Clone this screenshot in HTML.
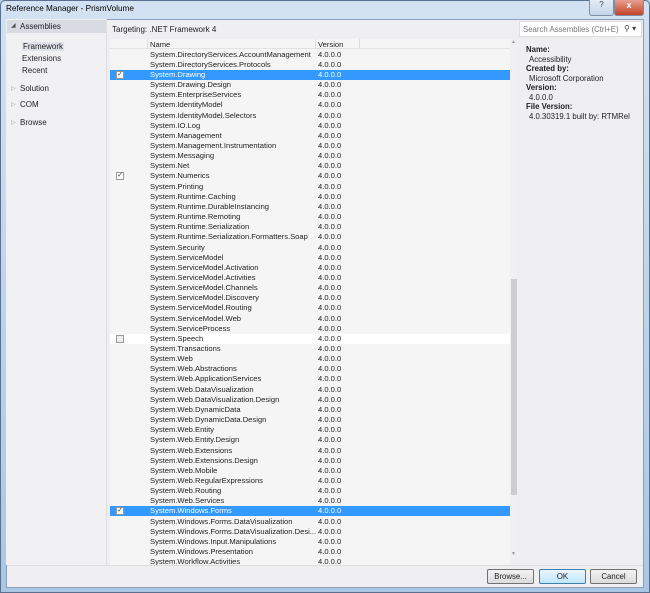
<!DOCTYPE html>
<html><head><meta charset="utf-8"><style>
*{margin:0;padding:0;box-sizing:border-box}
body{width:650px;height:593px;overflow:hidden;font-family:"Liberation Sans",sans-serif;font-size:7.6px;color:#1e1e1e;background:#b9d1ea;position:relative}
.frame{position:absolute;left:0;top:0;width:650px;height:593px;background:linear-gradient(#d3e2f2,#aac6e4);border:1px solid #5a7090;border-radius:5px 5px 0 0}
.title{position:absolute;left:6px;top:4px;font-size:8.2px;color:#000}
.tb{position:absolute;top:0;height:16px;border:1px solid #7b8ea8;border-top:none;border-radius:0 0 3px 3px}
.inner{position:absolute;left:6px;top:19px;width:638px;height:569px;background:#efeff2;border:1px solid #8ca0bc}
.left{position:absolute;left:6px;top:19px;width:101px;height:546px;background:#f1f1f3;border-right:1px solid #ddd}
.abs{position:absolute}
.list{position:absolute;left:110px;top:39px;width:408px;height:526px;background:#f5f5f5;overflow:hidden}
.row{position:absolute;left:0;width:400px;height:10px;line-height:10px}
.row .n{position:absolute;left:40px}
.row .v{position:absolute;left:208px}
.cb{position:absolute;left:6px;top:1px;width:8px;height:8px;border:1px solid #999;background:#fff;font-size:7px;line-height:6px;text-align:center;color:#333}
.btn{position:absolute;top:569px;height:15px;border:1px solid #707070;border-radius:2px;background:linear-gradient(#f2f2f2,#dcdcdc);text-align:center;line-height:13px;font-size:7.8px}
</style></head><body>
<div class="frame"></div>
<div class="title">Reference Manager - PrismVolume</div>
<div class="tb" style="left:589px;width:25px;background:linear-gradient(#e4ecf6,#c4d4e8);text-align:center;font-size:8px;color:#345">?</div>
<div class="tb" style="left:614px;width:30px;background:linear-gradient(#e8a08e,#c3432a);text-align:center;font-size:9px;color:#fff;font-weight:bold">x</div>
<div class="inner"></div>
<div class="left"></div>
<div class="abs" style="left:7px;top:20px;width:99px;height:13px;background:#d9dbe3"></div>
<div class="abs" style="left:11px;top:22px;font-size:6px;color:#555">◢</div>
<div class="abs" style="left:20px;top:22px;font-size:8px">Assemblies</div>
<div class="abs" style="left:22px;top:42px;font-size:8px;background:#e0e2ea;padding:0 1px">Framework</div>
<div class="abs" style="left:22px;top:54px;font-size:8px">Extensions</div>
<div class="abs" style="left:22px;top:66px;font-size:8px">Recent</div>
<div class="abs" style="left:11px;top:85px;font-size:6px;color:#999">▷</div><div class="abs" style="left:20px;top:84px;font-size:8px">Solution</div>
<div class="abs" style="left:11px;top:101px;font-size:6px;color:#999">▷</div><div class="abs" style="left:20px;top:100px;font-size:8px">COM</div>
<div class="abs" style="left:11px;top:119px;font-size:6px;color:#999">▷</div><div class="abs" style="left:20px;top:118px;font-size:8px">Browse</div>
<div class="abs" style="left:112px;top:25px;font-size:8px">Targeting: .NET Framework 4</div>
<div class="abs" style="left:519px;top:21px;width:123px;height:16px;background:#fff;border:1px solid #ddd"></div>
<div class="abs" style="left:523px;top:25px;font-size:7.8px;color:#777">Search Assemblies (Ctrl+E)</div>
<div class="abs" style="left:624px;top:24px;font-size:8px;color:#444">⚲ ▾</div>
<div class="list">
<div class="abs" style="left:0;top:0;width:400px;height:10px;background:#f5f5f5;border-bottom:1px solid #e2e2e2"></div>
<div class="abs" style="left:37px;top:0;height:10px;border-left:1px solid #ddd"></div>
<div class="abs" style="left:205px;top:0;height:10px;border-left:1px solid #ddd"></div>
<div class="abs" style="left:249px;top:0;height:10px;border-left:1px solid #ddd"></div>
<div class="abs" style="left:40px;top:1px">Name</div><div class="abs" style="left:208px;top:1px">Version</div>
<div class="abs" style="left:400px;top:0;width:8px;height:526px;background:#f0f0f0"></div>
<div class="abs" style="left:401px;top:240px;width:6px;height:216px;background:#cdcdd2"></div>
<div class="abs" style="left:401px;top:0;font-size:5px;color:#999">▲</div>
<div class="abs" style="left:401px;top:512px;font-size:5px;color:#999">▼</div>
<div id="rows"></div>
</div>
<div class="abs" style="left:526px;top:45px;font-weight:bold;line-height:9.5px;font-size:7.8px">Name:<br><span style="font-weight:normal;padding-left:3px">Accessibility</span><br>Created by:<br><span style="font-weight:normal;padding-left:3px">Microsoft Corporation</span><br>Version:<br><span style="font-weight:normal;padding-left:3px">4.0.0.0</span><br>File Version:<br><span style="font-weight:normal;padding-left:3px">4.0.30319.1 built by: RTMRel</span></div>
<div class="abs" style="left:7px;top:565px;width:636px;height:22px;background:#efeff2;border-top:1px solid #ddd"></div>
<div class="btn" style="left:487px;width:47px">Browse...</div>
<div class="btn" style="left:539px;width:47px;border-color:#3c7fb1;background:linear-gradient(#eaf6fd,#bee6fd)">OK</div>
<div class="btn" style="left:590px;width:47px">Cancel</div>
<script>
var names=["System.DirectoryServices.AccountManagement","System.DirectoryServices.Protocols","*System.Drawing","System.Drawing.Design","System.EnterpriseServices","System.IdentityModel","System.IdentityModel.Selectors","System.IO.Log","System.Management","System.Management.Instrumentation","System.Messaging","System.Net","+System.Numerics","System.Printing","System.Runtime.Caching","System.Runtime.DurableInstancing","System.Runtime.Remoting","System.Runtime.Serialization","System.Runtime.Serialization.Formatters.Soap","System.Security","System.ServiceModel","System.ServiceModel.Activation","System.ServiceModel.Activities","System.ServiceModel.Channels","System.ServiceModel.Discovery","System.ServiceModel.Routing","System.ServiceModel.Web","System.ServiceProcess","-System.Speech","System.Transactions","System.Web","System.Web.Abstractions","System.Web.ApplicationServices","System.Web.DataVisualization","System.Web.DataVisualization.Design","System.Web.DynamicData","System.Web.DynamicData.Design","System.Web.Entity","System.Web.Entity.Design","System.Web.Extensions","System.Web.Extensions.Design","System.Web.Mobile","System.Web.RegularExpressions","System.Web.Routing","System.Web.Services","*System.Windows.Forms","System.Windows.Forms.DataVisualization","System.Windows.Forms.DataVisualization.Desi...","System.Windows.Input.Manipulations","System.Windows.Presentation","System.Workflow.Activities"];
var h="";names.forEach(function(s,i){var t=10.15*(i+1)+0.5,bg="",cb="",col="",f=s[0];
if(f=="*"){bg="#3399ff";col="color:#fff";cb='<div class="cb">✓</div>';s=s.slice(1)}else if(f=="+"){cb='<div class="cb">✓</div>';s=s.slice(1)}else if(f=="-"){bg="#fff";cb='<div class="cb" style="background:#eee"></div>';s=s.slice(1)}
h+='<div class="row" style="top:'+t+'px;'+(bg?'background:'+bg+';':'')+col+'">'+cb+'<span class="n">'+s+'</span><span class="v">4.0.0.0</span></div>';});
document.getElementById("rows").innerHTML=h;
</script>
</body></html>
